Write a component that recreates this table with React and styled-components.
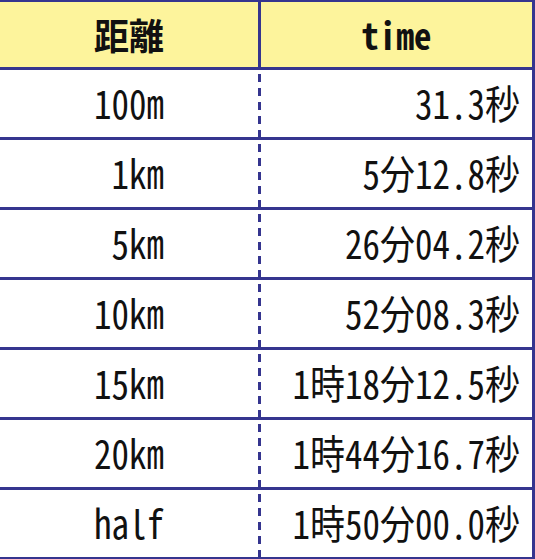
import React from "react";
import styled, { createGlobalStyle } from "styled-components";

const Global = createGlobalStyle`
  html, body { margin: 0; padding: 0; background: #ffffff; }
  body { font-family: "Noto Sans Mono CJK JP", "Noto Sans CJK JP", monospace; }
`;

const NAVY = "#35358f";

const Table = styled.div`
  width: 535px;
  box-sizing: border-box;
  border-top: 2px solid ${NAVY};
  border-right: 3px solid ${NAVY};
  display: flex;
  flex-direction: column;
`;

const Row = styled.div`
  display: grid;
  grid-template-columns: 258px 1fr;
  height: ${(p) => (p.$head ? 68 : 70)}px;
  box-sizing: border-box;
  border-bottom: 3px solid ${NAVY};
  background: ${(p) => (p.$head ? "#fdf49c" : "#ffffff")};
`;

const Cell = styled.div`
  display: flex;
  align-items: center;
  justify-content: ${(p) => (p.$align === "right" ? "flex-end" : "center")};
  padding-right: ${(p) => (p.$align === "right" ? "12px" : "0")};
  padding-bottom: ${(p) => (p.$head ? "2px" : "5px")};
  box-sizing: border-box;
  white-space: pre;
  font-family: "Noto Sans Mono CJK JP", "Noto Sans CJK JP", monospace;
  font-size: 35px;
  font-weight: ${(p) => (p.$head ? 700 : 400)};
  color: #111111;
  line-height: 1;
`;

const RightCell = styled(Cell)`
  border-left: 3px solid transparent;
  ${(p) =>
    p.$head
      ? `border-left-color: ${NAVY};`
      : `background-image: repeating-linear-gradient(to bottom, ${NAVY} 0 8px, transparent 8px 14px);
         background-size: 3px 100%;
         background-repeat: no-repeat;
         background-origin: border-box;
         background-clip: border-box;
         background-position: 0 4px;`}
`;

const Tall = styled.span`
  display: inline-block;
  transform: scaleY(${(p) => (p.$head ? 1.05 : 1.14)});
  transform-origin: center;
`;

const rows = [
  ["100m", "31.3秒"],
  [" 1km", "5分12.8秒"],
  [" 5km", "26分04.2秒"],
  ["10km", "52分08.3秒"],
  ["15km", "1時18分12.5秒"],
  ["20km", "1時44分16.7秒"],
  ["half", "1時50分00.0秒"],
];

export default function App() {
  return (
    <>
      <Global />
      <Table>
        <Row $head>
          <Cell $head>
            <Tall $head>距離</Tall>
          </Cell>
          <RightCell $head>
            <Tall $head>time</Tall>
          </RightCell>
        </Row>
        {rows.map(([d, t]) => (
          <Row key={d}>
            <Cell>
              <Tall>{d}</Tall>
            </Cell>
            <RightCell $align="right">
              <Tall>{t}</Tall>
            </RightCell>
          </Row>
        ))}
      </Table>
    </>
  );
}
